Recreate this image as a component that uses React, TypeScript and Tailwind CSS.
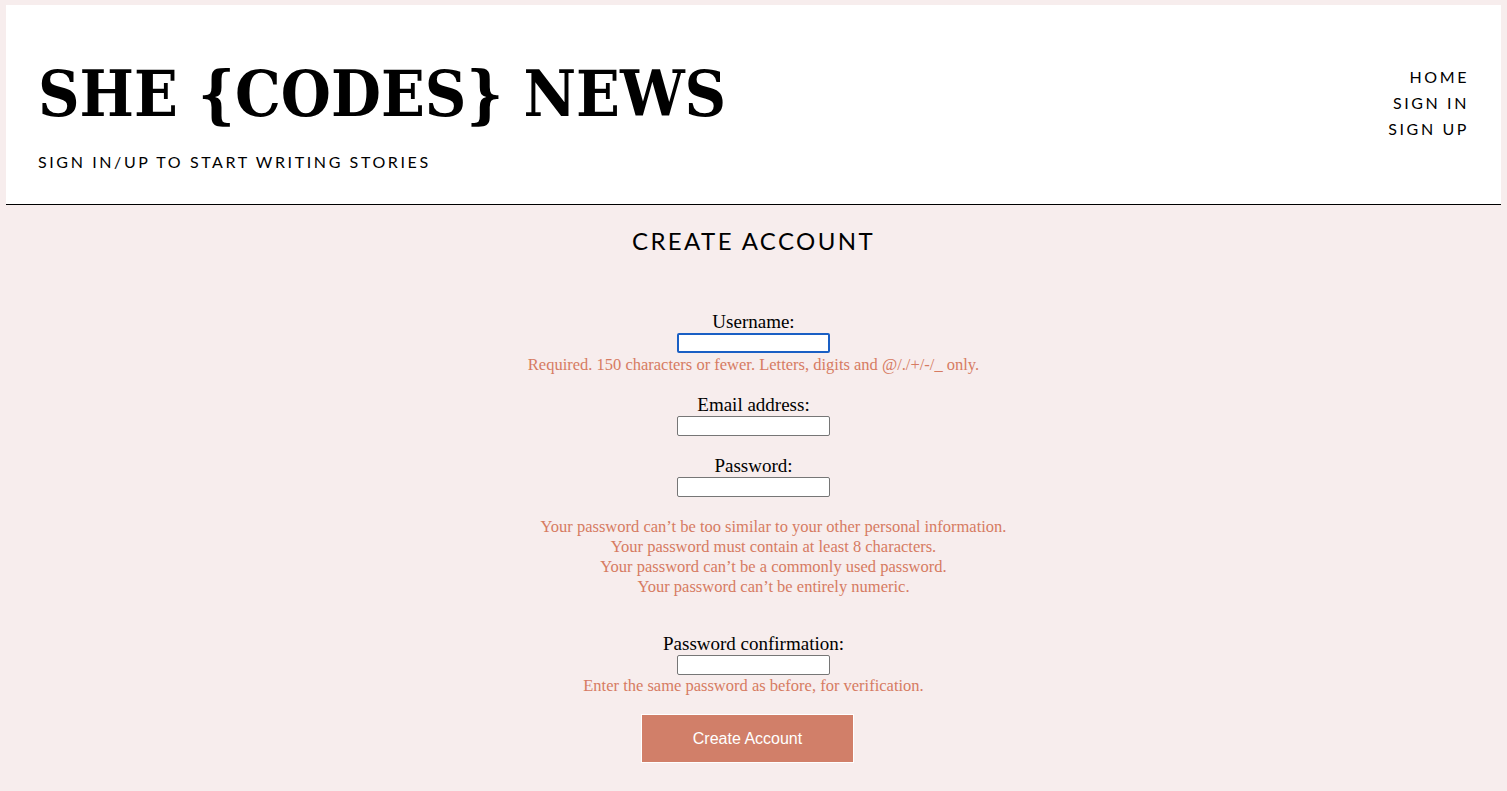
export default function App() {
  const serif = { fontFamily: '"Liberation Serif", "DejaVu Serif", serif' };
  return (
    <div className="min-h-[791px] bg-[#f7eded] pt-[5px] px-[6px]">
      <header className="bg-white border-b border-black h-[200px] flex justify-between pl-[32px] pr-[32px]">
        <div className="flex flex-col">
          <h1 className="mt-[49px] text-[64px] leading-[80px] font-bold text-black font-['DejaVu_Serif_Condensed','DejaVu_Serif',serif]">
            SHE {'{'}CODES{'}'} NEWS
          </h1>
          <p className="mt-[16px] text-[16px] tracking-[2.6px] text-black font-['Lato',sans-serif]">
            SIGN IN/UP TO START WRITING STORIES
          </p>
        </div>
        <nav className="mt-[59px] flex flex-col items-end text-[16px] leading-[26px] tracking-[2.6px] text-black font-['Lato',sans-serif]">
          <a>HOME</a>
          <a>SIGN IN</a>
          <a>SIGN UP</a>
        </nav>
      </header>
      <main className="flex flex-col items-center">
        <h2 className="mt-[21px] text-[24px] leading-[30px] tracking-[2.4px] text-black font-['Lato',sans-serif]">
          CREATE ACCOUNT
        </h2>
        <form className="mt-[54px] flex flex-col items-center text-center" style={serif}>
          <label className="text-[19px] leading-[23px] text-black">Username:</label>
          <input className="w-[153px] h-[20px] bg-white border-2 border-[#1a5fc4] rounded-[2px]" />
          <span className="text-[16.5px] leading-[23px] text-[#d67b62]">
            Required. 150 characters or fewer. Letters, digits and @/./+/-/_ only.
          </span>
          <label className="mt-[17px] text-[19px] leading-[23px] text-black">Email address:</label>
          <input className="w-[153px] h-[20px] bg-white border border-[#767676] rounded-[2px]" />
          <label className="mt-[18px] text-[19px] leading-[23px] text-black">Password:</label>
          <input className="w-[153px] h-[20px] bg-white border border-[#767676] rounded-[2px]" />
          <ul className="mt-[20px] pl-[40px] text-[16.5px] leading-[20px] text-[#d67b62]">
            <li>Your password can’t be too similar to your other personal information.</li>
            <li>Your password must contain at least 8 characters.</li>
            <li>Your password can’t be a commonly used password.</li>
            <li>Your password can’t be entirely numeric.</li>
          </ul>
          <label className="mt-[35px] text-[19px] leading-[23px] text-black">Password confirmation:</label>
          <input className="w-[153px] h-[20px] bg-white border border-[#767676] rounded-[2px]" />
          <span className="text-[16.5px] leading-[22px] text-[#d67b62]">
            Enter the same password as before, for verification.
          </span>
          <button
            type="button"
            className="mt-[17px] mr-[12px] w-[213px] h-[49px] bg-[#d17f69] text-white text-[16px] border border-white font-['Liberation_Sans',Arial,sans-serif]"
          >
            Create Account
          </button>
        </form>
      </main>
    </div>
  );
}
